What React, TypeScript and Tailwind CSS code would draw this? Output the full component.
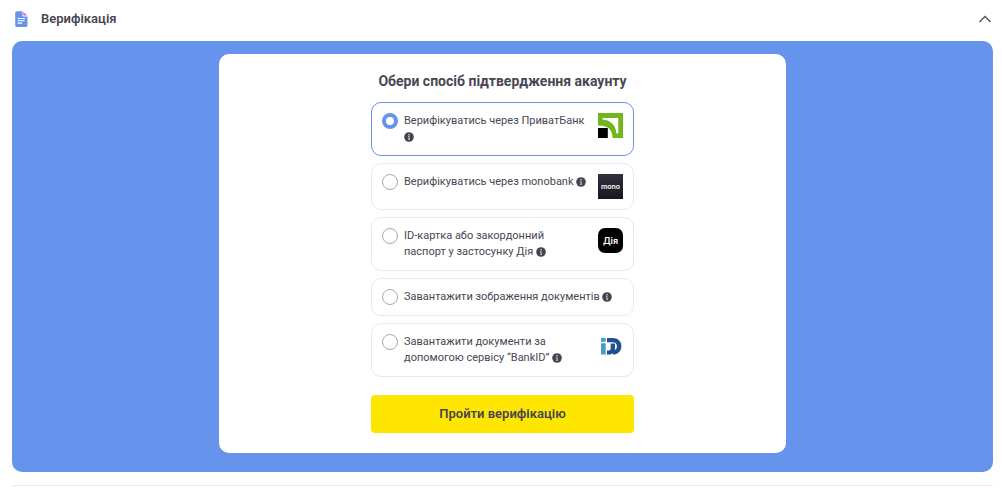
import { useState } from 'react';
import type { ReactNode } from 'react';

function DocumentIcon() {
  return (
    <svg viewBox="0 0 13 17" className="h-[17px] w-[13px]" aria-hidden="true">
      <path d="M2 0.2H7.5V4.2Q7.5 5.5 8.8 5.5H12.5V14.4Q12.5 16 10.8 16H1.8Q0.2 16 0.2 14.4V1.9Q0.2 0.2 2 0.2Z" fill="#6694ed" />
      <path d="M8.2 1L12.3 4.6H9.3Q8.2 4.6 8.2 3.6Z" fill="#d95fc4" />
      <path d="M2.6 7.5H10M2.6 9.8H9.6M2.6 12.1H7" stroke="#fff" strokeWidth="1.1" />
    </svg>
  );
}

function ChevronUp() {
  return (
    <svg viewBox="0 0 14 8" className="h-2 w-[14px]" fill="none" aria-hidden="true">
      <path d="M1.5 7L7 1.5L12.5 7" stroke="#5b5965" strokeWidth="1.5" />
    </svg>
  );
}

function InfoIcon() {
  return (
    <svg viewBox="0 0 10 10" className="inline-block h-[10px] w-[10px] align-[-2px]" aria-hidden="true">
      <circle cx="5" cy="5" r="4.8" fill="#45434f" />
      <circle cx="5" cy="2.7" r="0.7" fill="#fff" />
      <path d="M4.1 4.4H5.1V7.2M4.1 7.3H6" stroke="#fff" strokeWidth="0.7" fill="none" />
    </svg>
  );
}

function PrivatLogo() {
  return (
    <svg viewBox="0 0 25 25" className="h-[25px] w-[25px]" aria-hidden="true">
      <path d="M0 0H25V25H14.5C14.5 17 10.5 12.5 0 12.5Z" fill="#72b61e" />
      <path d="M4.5 5H20.3V20.5H18.5C17.9 12.2 12.7 6.9 4.5 6.4Z" fill="#fff" />
      <path d="M0 15H9.8V25H0Z" fill="#000" />
    </svg>
  );
}

function MonoLogo() {
  return (
    <span className="flex h-[25px] w-[25px] items-center justify-center bg-linear-to-b from-[#31303d] to-[#181820] font-['Inter',sans-serif] text-[7px] font-semibold text-white">
      mono
    </span>
  );
}

function DiiaLogo() {
  return (
    <span className="flex h-[25px] w-[25px] items-center justify-center rounded-[7px] bg-black font-['Inter',sans-serif] text-[9px] font-semibold text-white">
      Дія
    </span>
  );
}

function BankIdLogo() {
  return (
    <svg viewBox="0 0 25 25" className="h-[25px] w-[25px]" aria-hidden="true">
      <path d="M3 4H7.7V7.8H3ZM3 9.3H7.7V20.5H3Z" fill="#43a0c3" />
      <path d="M9 4H14.5C20 4 23.4 7.2 23.4 12.2C23.4 17.3 19.8 20.5 14.8 20.5V16.5C17.5 16.5 18.9 15 18.9 12.3C18.9 9.6 17.3 8.2 14.5 8.2H9Z" fill="#20508f" />
      <path d="M12.7 9.5H17V14C17 18.2 14.8 20.5 10.8 20.5H9V16.5H10C12 16.5 12.7 15.9 12.7 14Z" fill="#20508f" />
    </svg>
  );
}

type Option = { id: string; label: string; logo?: ReactNode };

const OPTIONS: Option[] = [
  { id: 'privat', label: 'Верифікуватись через ПриватБанк', logo: <PrivatLogo /> },
  { id: 'mono', label: 'Верифікуватись через monobank', logo: <MonoLogo /> },
  { id: 'diia', label: 'ID-картка або закордонний паспорт у застосунку Дія', logo: <DiiaLogo /> },
  { id: 'upload', label: 'Завантажити зображення документів' },
  { id: 'bankid', label: 'Завантажити документи за допомогою сервісу “BankID”', logo: <BankIdLogo /> },
];

export default function App() {
  const [selected, setSelected] = useState('privat');
  const [open, setOpen] = useState(true);

  return (
    <main className="bg-white pr-[9px] pl-3 font-['Roboto',sans-serif] text-[#484652]">
      <h2>
        <button
          type="button"
          aria-expanded={open}
          onClick={() => setOpen(!open)}
          className="flex w-full items-center gap-[13px] pt-[9px] pr-px pb-3 pl-[3px] text-left text-[13px] leading-5 font-semibold"
        >
          <DocumentIcon />
          <span className="flex-1">Верифікація</span>
          <ChevronUp />
        </button>
      </h2>

      {open && (
        <section className="rounded-[10px] bg-[#6694ed] px-3 pt-[13px] pb-[19px]">
          <form
            onSubmit={e => e.preventDefault()}
            className="mx-auto max-w-[567px] rounded-[10px] bg-white px-4 pt-[17px] pb-5"
          >
            <fieldset className="mx-auto max-w-[263px]">
              <legend className="w-full text-center text-[14px] leading-5 font-bold whitespace-nowrap">
                Обери спосіб підтвердження акаунту
              </legend>

              <div className="mt-[11px] flex flex-col gap-[7px]">
                {OPTIONS.map(option => (
                  <label
                    key={option.id}
                    className="flex items-start gap-[6px] rounded-[10px] border border-[#e1ebf2] p-[10px] text-[11px] leading-4 has-checked:border-[#6694ed]"
                  >
                    <input
                      type="radio"
                      name="method"
                      value={option.id}
                      checked={selected === option.id}
                      onChange={() => setSelected(option.id)}
                      className="h-4 w-4 shrink-0 appearance-none rounded-full border border-[#a9a8ae] checked:border-4 checked:border-[#6694ed]"
                    />
                    <span className="flex-1 pr-1">
                      {option.label} <InfoIcon />
                    </span>
                    {option.logo}
                  </label>
                ))}
              </div>

              <button
                type="submit"
                className="mt-[18px] w-full rounded-[4px] bg-[#ffe600] text-[13px] leading-[38px] font-semibold"
              >
                Пройти верифікацію
              </button>
            </fieldset>
          </form>
        </section>
      )}

      <hr className="mt-[13px] border-[#e8e9ef]" />
    </main>
  );
}
